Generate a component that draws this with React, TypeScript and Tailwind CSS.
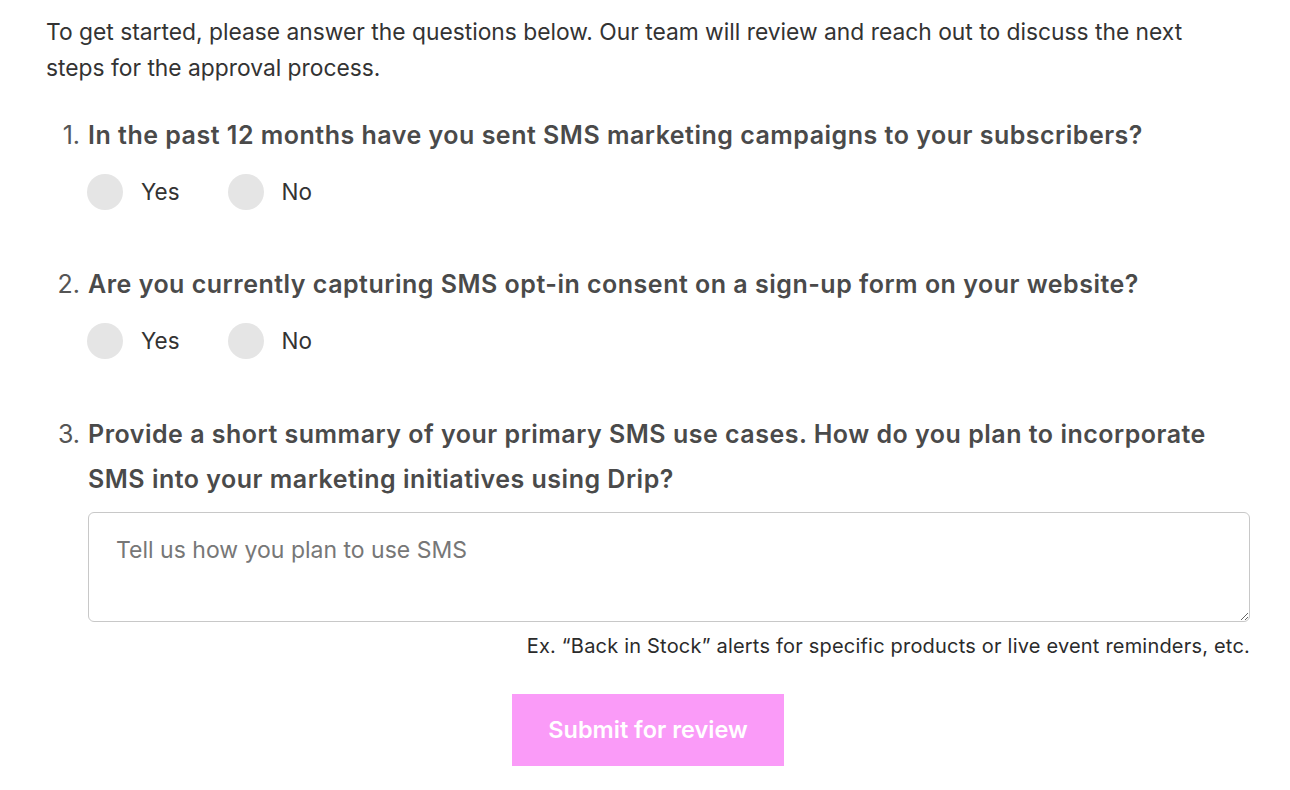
import React from 'react';

const font = { fontFamily: 'Inter, "Noto Sans", sans-serif' };

function Radios({ name }: { name: string }) {
  return (
    <div className="flex items-center h-[36px] pl-[41px] gap-[48px]">
      {['Yes', 'No'].map((opt) => (
        <label key={opt} className="flex items-center gap-[18px] cursor-pointer">
          <input type="radio" name={name} className="appearance-none w-[36px] h-[36px] rounded-full bg-[#e5e5e5] m-0" />
          <span className="text-[22.5px] text-[#333333]">{opt}</span>
        </label>
      ))}
    </div>
  );
}

function Question({ n, children }: { n: number; children: React.ReactNode }) {
  return (
    <div className="grid grid-cols-[42px_1fr]">
      <span className="text-right pr-[8px] text-[25px] leading-[45px] text-[#555555]">{n}.</span>
      <span className="text-[25px] leading-[45px] font-semibold tracking-[0.5px] text-[#4a4a4a]">{children}</span>
    </div>
  );
}

export default function App() {
  return (
    <div className="bg-white min-h-[790px] pl-[46px] pr-[40px] pt-[14px]" style={font}>
      <div className="w-[1204px]">
        <p className="max-w-[1160px] text-[22.8px] leading-[36px] text-[#333333]">
          To get started, please answer the questions below. Our team will review and reach out to discuss the next
          steps for the approval process.
        </p>

        <div className="mt-[27px]">
          <Question n={1}>In the past 12 months have you sent SMS marketing campaigns to your subscribers?</Question>
          <div className="mt-[16px]">
            <Radios name="q1" />
          </div>
        </div>

        <div className="mt-[52px]">
          <Question n={2}>Are you currently capturing SMS opt-in consent on a sign-up form on your website?</Question>
          <div className="mt-[16px]">
            <Radios name="q2" />
          </div>
        </div>

        <div className="mt-[53px]">
          <Question n={3}>
            Provide a short summary of your primary SMS use cases. How do you plan to incorporate SMS into your marketing initiatives using Drip?
          </Question>
          <div className="pl-[42px] mt-[10px]">
            <textarea
              placeholder="Tell us how you plan to use SMS"
              className="block w-full h-[110px] rounded-[6px] border border-[#c8c8c8] px-[27px] pt-[24px] text-[23px] leading-[26px] text-[#333333] placeholder:text-[#777777] outline-none"
            />
            <p className="text-right mt-[10px] text-[20px] tracking-[0.2px] leading-[28px] text-[#2b2b2b]">
              Ex. “Back in Stock” alerts for specific products or live event reminders, etc.
            </p>
          </div>
        </div>

        <div className="flex justify-center mt-[34px]">
          <button className="w-[272px] h-[72px] bg-[#fa9bf8] text-white text-[23.5px] font-semibold">
            Submit for review
          </button>
        </div>
      </div>
    </div>
  );
}
